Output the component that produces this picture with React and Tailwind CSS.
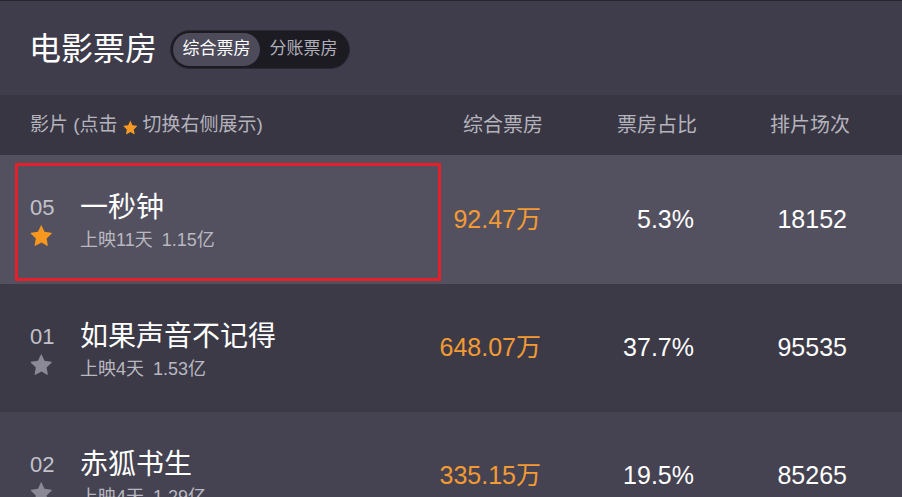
import React from "react";

const Star = ({ className }) => (
  <svg viewBox="0 0 24 24" className={className} fill="currentColor">
    <path d="M12 1.6l3.1 6.6 7.1.9c.5.1.7.7.3 1l-5.2 4.9 1.3 7.1c.1.5-.4.9-.9.6L12 19.3l-6.3 3.4c-.5.3-1-.1-.9-.6l1.3-7.1L.9 10.1c-.4-.3-.2-.9.3-1l7.1-.9L11.4 1.6c.2-.5.9-.5 1.1 0z" />
  </svg>
);

const rows = [
  { rank: "05", name: "一秒钟", days: "上映11天", total: "1.15亿", box: "92.47万", pct: "5.3%", shows: "18152", bg: "bg-[#53515f]", h: "h-[129px]", active: true },
  { rank: "01", name: "如果声音不记得", days: "上映4天", total: "1.53亿", box: "648.07万", pct: "37.7%", shows: "95535", bg: "bg-[#3c3a47]", h: "h-[128px]" },
  { rank: "02", name: "赤狐书生", days: "上映4天", total: "1.29亿", box: "335.15万", pct: "19.5%", shows: "85265", bg: "bg-[#454351]", h: "h-[128px]" },
];

export default function App() {
  return (
    <div
      className="w-[902px] h-[497px] overflow-hidden bg-[#3f3d4c] border-t border-[#26252e]"
      style={{ fontFamily: '"Liberation Sans", "Noto Sans CJK SC", sans-serif' }}
    >
      {/* Top header */}
      <div className="h-[94px] flex items-center pl-[29px] pt-[2px]">
        <div className="text-[32px] leading-[40px] text-white">电影票房</div>
        <div className="ml-[13px] flex p-[2px] rounded-full bg-[#1c1b22] border border-[#2a2933]">
          <div className="w-[87px] h-[33px] rounded-full bg-[#4d4a5a] flex items-center justify-center text-[17px] text-white whitespace-nowrap">
            综合票房
          </div>
          <div className="w-[87px] h-[33px] rounded-full flex items-center justify-center text-[17px] text-[#b0afb8] whitespace-nowrap">
            分账票房
          </div>
        </div>
      </div>

      {/* Column header */}
      <div className="h-[60px] bg-[#383643] flex items-center text-[19px] text-[#b4b3bc] whitespace-nowrap">
        <div className="w-[440px] pl-[30px] flex items-center">
          <span>影片 (点击</span>
          <Star className="w-[15px] h-[15px] text-[#f59a23] mx-[5px] mt-[5px]" />
          <span>切换右侧展示)</span>
        </div>
        <div className="w-[103px] text-right text-[20px]">综合票房</div>
        <div className="w-[154px] text-right text-[20px]">票房占比</div>
        <div className="w-[153px] text-right text-[20px]">排片场次</div>
      </div>

      {/* Rows */}
      {rows.map((r) => (
        <div key={r.rank} className={`relative flex ${r.bg} ${r.h}`}>
          <div className="w-[440px] pl-[30px] pt-[37px] flex">
            <div className="w-[50px] flex flex-col">
              <div className="text-[22px] leading-[32px] text-[#c3c2cb]">{r.rank}</div>
              <Star className={`w-[23px] h-[23px] ${r.active ? "text-[#f7971e]" : "text-[#8b8996]"}`} />
            </div>
            <div className="flex flex-col whitespace-nowrap">
              <div className="text-[28px] leading-[32px] text-white">{r.name}</div>
              <div className="mt-[5px] text-[18px] leading-[22px] text-[#b9b8c1]">
                {r.days}
                <span className="ml-[9px]">{r.total}</span>
              </div>
            </div>
          </div>
          <div className="w-[101px] flex items-center justify-end text-[25px] text-[#f39a33] whitespace-nowrap">{r.box}</div>
          <div className="w-[153px] flex items-center justify-end text-[25px] text-white whitespace-nowrap">{r.pct}</div>
          <div className="w-[153px] flex items-center justify-end text-[25px] text-white whitespace-nowrap">{r.shows}</div>
          {r.active && (
            <div className="absolute left-[15px] top-[8px] w-[426px] h-[118px] border-[3px] border-[#e5202a] pointer-events-none" />
          )}
        </div>
      ))}
    </div>
  );
}
